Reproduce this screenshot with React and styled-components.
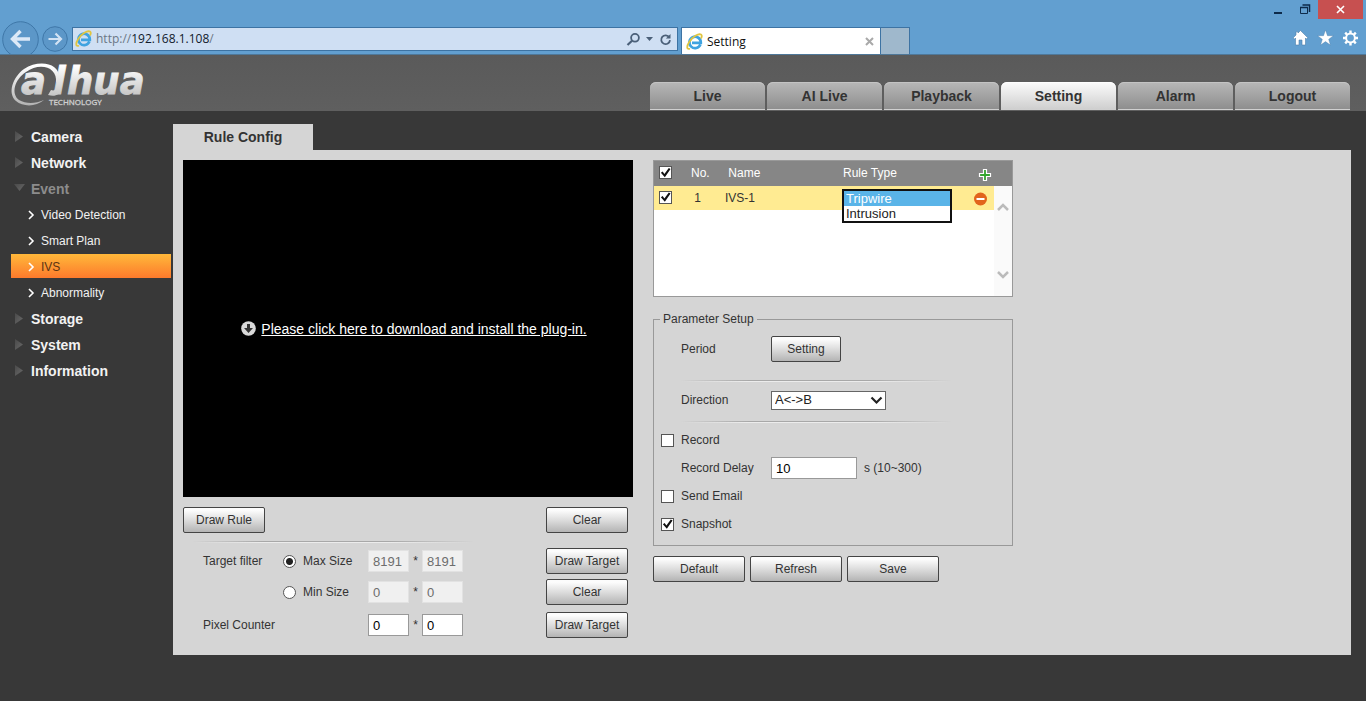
import React, { useState } from "react";
import styled, { createGlobalStyle, css } from "styled-components";

const GlobalStyle = createGlobalStyle`
  * {
    box-sizing: border-box;
  }
  body {
    margin: 0;
    background: #383838;
    color: #333;
    font-family: "Liberation Sans", Arial, sans-serif;
    font-size: 12px;
    line-height: 14px;
  }
  button, input, select {
    margin: 0;
    font-family: inherit;
  }
`;

/* ---------- browser window ---------- */

const BrowserBar = styled.div`
  height: 55px;
  overflow: hidden;
  background: #629fd0;
  border-bottom: 1px solid #4f7899;
  font-family: "Open Sans", "Noto Sans", sans-serif;
`;

const TitleBar = styled.div`
  display: flex;
  justify-content: flex-end;
  height: 19px;
  padding-right: 3px;
`;

const WindowButton = styled.button`
  display: grid;
  place-items: center;
  width: ${(p) => (p.$close ? "45px" : "26px")};
  height: 19px;
  padding: 0;
  border: 0;
  background: ${(p) => (p.$close ? "#c75050" : "transparent")};
`;

const BrowserRow = styled.div`
  display: flex;
  align-items: flex-start;
`;

const NavButtons = styled.div`
  display: flex;
  gap: 3px;
  width: 72px;
  flex: none;
  padding: 2px 0 0 2px;
`;

const RoundButton = styled.button`
  display: block;
  padding: 0;
  border: 0;
  background: none;
  height: ${(p) => p.$size}px;
  margin-top: ${(p) => (p.$size < 30 ? 5 : 0)}px;
`;

const AddressBar = styled.form`
  display: flex;
  align-items: center;
  gap: 3px;
  flex: 0 1 606px;
  height: 24px;
  margin-top: 8px;
  padding: 0 5px 0 2px;
  background: #cfdff3;
  border: 1px solid #3d73a3;
`;

const Address = styled.div`
  flex: 1;
  font-size: 12px;
  line-height: 18px;
  color: #111a2b;

  span {
    color: #6b7785;
  }
`;

const IconButton = styled.button`
  display: grid;
  place-items: center;
  padding: 0;
  border: 0;
  background: none;
`;

const BrowserTab = styled.div`
  display: flex;
  align-items: center;
  gap: 3px;
  width: 200px;
  height: 28px;
  margin: 8px 0 0 3px;
  padding: 0 6px 0 4px;
  background: #fff;
  border: 1px solid #3d73a3;
  border-bottom: 0;
  font-size: 12px;
  line-height: 18px;
  color: #111;

  span {
    flex: 1;
  }
`;

const NewTab = styled.button`
  width: 29px;
  height: 28px;
  margin-top: 8px;
  padding: 0;
  background: #9fb8cc;
  border: 1px solid #3d73a3;
  border-width: 1px 1px 0 0;
`;

const BrowserTools = styled.div`
  display: flex;
  gap: 8px;
  margin: 10px 7px 0 auto;
`;

const EdgeLogo = () => (
  <svg width="18" height="18" viewBox="0 0 18 18" fill="none">
    <path
      d="M14.4 11.6a5.7 5.7 0 1 1 .4-2.6v.8H6"
      stroke="#3fa3e0"
      strokeWidth="2.7"
    />
    <path
      d="M3.3 15.8C.6 16.6.6 13 3.2 9 6.4 4 12.6.1 15 1.6c1 .6.9 1.8.3 3.2"
      stroke="#e0c540"
      strokeWidth="1.8"
      strokeLinecap="round"
    />
  </svg>
);

const BrowserChrome = () => (
  <BrowserBar>
    <TitleBar>
      <WindowButton aria-label="Minimize">
        <svg width="10" height="10" viewBox="0 0 10 10">
          <path d="M0 7h8v2H0z" fill="#0d2a4a" />
        </svg>
      </WindowButton>
      <WindowButton aria-label="Restore">
        <svg width="11" height="11" viewBox="0 0 11 11" fill="none" stroke="#0d2a4a">
          <path d="M.5 3.5h7v6h-7z" />
          <path d="M0 3.5h8M2.5 1h7v7" strokeWidth="1.5" />
        </svg>
      </WindowButton>
      <WindowButton $close aria-label="Close">
        <svg width="9" height="9" viewBox="0 0 9 9" stroke="#fff" strokeWidth="1.6">
          <path d="M1 1l7 7M8 1l-7 7" />
        </svg>
      </WindowButton>
    </TitleBar>
    <BrowserRow>
      <NavButtons>
        <RoundButton $size={37} aria-label="Back">
          <svg width="37" height="37" viewBox="0 0 37 37" fill="none">
            <circle cx="18.5" cy="18.5" r="17.8" fill="#5c97c8" stroke="#3f77a8" />
            <path
              d="M18.5 10l-8 8 8 8M11 18h17"
              stroke="#dce9f7"
              strokeWidth="3.4"
            />
          </svg>
        </RoundButton>
        <RoundButton $size={26} aria-label="Forward">
          <svg width="26" height="26" viewBox="0 0 26 26" fill="none">
            <circle cx="13" cy="13" r="12.3" fill="#5c97c8" stroke="#3f77a8" />
            <path d="M13.5 7.5l5.5 5.5-5.5 5.5M6.5 13h12" stroke="#d3e3f4" strokeWidth="2.2" />
          </svg>
        </RoundButton>
      </NavButtons>
      <AddressBar>
        <EdgeLogo />
        <Address>
          <span>http://</span>192.168.1.108<span>/</span>
        </Address>
        <IconButton type="button" aria-label="Search">
          <svg width="15" height="15" viewBox="0 0 15 15" fill="none" stroke="#4b6079">
            <circle cx="9" cy="5.8" r="3.9" strokeWidth="1.8" />
            <path d="M6 8.8L1.5 13" strokeWidth="2.2" />
          </svg>
        </IconButton>
        <IconButton type="button" aria-label="Show address bar list">
          <svg width="12" height="10" viewBox="0 0 12 10">
            <path d="M2 3h7L5.5 7z" fill="#4b6079" />
          </svg>
        </IconButton>
        <IconButton type="button" aria-label="Reload">
          <svg width="13" height="13" viewBox="0 0 13 13" fill="none" stroke="#4b6079">
            <path d="M10.3 4.3A4.4 4.4 0 1 0 11 7.2" strokeWidth="1.8" />
            <path d="M11.5 1v4.6H6.9z" fill="#4b6079" stroke="none" />
          </svg>
        </IconButton>
      </AddressBar>
      <BrowserTab>
        <EdgeLogo />
        <span>Setting</span>
        <IconButton aria-label="Close tab">
          <svg width="9" height="9" viewBox="0 0 9 9" stroke="#a9a9a9" strokeWidth="2">
            <path d="M1 1l7 7M8 1l-7 7" />
          </svg>
        </IconButton>
      </BrowserTab>
      <NewTab aria-label="New tab" />
      <BrowserTools>
        <IconButton aria-label="Home">
          <svg width="17" height="18" viewBox="0 0 17 18">
            <path
              d="M8.5 1.5l7.3 7.3-1.3 1.3-1-1V16H10v-5H7v5H3.5V9.1l-1 1-1.300-1.300L4 6V2.800h2V4z"
              fill="#fff"
              stroke="#4e7ea8"
              strokeWidth=".6"
            />
          </svg>
        </IconButton>
        <IconButton aria-label="Favorites">
          <svg width="17" height="18" viewBox="0 0 17 18">
            <path
              d="M8.5 1l2 5.7h5.9l-4.7 3.6 1.700 5.800-4.900-3.500-4.900 3.500 1.700-5.800L.6 6.700h5.900z"
              fill="#fff"
              stroke="#4e7ea8"
              strokeWidth=".4"
            />
          </svg>
        </IconButton>
        <IconButton aria-label="Tools">
          <svg width="17" height="18" viewBox="0 0 17 18" fill="none" stroke="#fff">
            <circle cx="8.5" cy="9" r="4.4" strokeWidth="2" />
            <path
              d="M8.5 1.5v3M8.5 13.5v3M1 9h3M13 9h3M3.200 3.700l2.100 2.100M11.700 12.200l2.100 2.100M3.200 14.300l2.100-2.100M11.700 5.800l2.100-2.100"
              strokeWidth="2.4"
            />
          </svg>
        </IconButton>
      </BrowserTools>
    </BrowserRow>
  </BrowserBar>
);

/* ---------- page header ---------- */

const Header = styled.header`
  display: flex;
  align-items: flex-end;
  justify-content: space-between;
  height: 56px;
  padding: 0 16px 1px 10px;
  background: linear-gradient(#5a5a5a, #5f5f5f);
`;

const TopNav = styled.nav`
  display: flex;
  gap: 2px;
`;

const TopLink = styled.a`
  width: 115px;
  height: 28px;
  border-radius: 6px 6px 0 0;
  border-bottom: 1px solid #d0d0d0;
  box-shadow: inset 0 1px 0 ${(p) => (p.$active ? "#fff" : "#c4c4c4")};
  background: ${(p) =>
    p.$active
      ? "linear-gradient(#fcfcfc, #cfcfcf)"
      : "linear-gradient(#b8b8b8, #8e8e8e)"};
  color: #333;
  font-size: 14px;
  font-weight: bold;
  line-height: 29px;
  text-align: center;
  text-decoration: none;
`;

const LogoMark = styled.svg`
  display: block;
  overflow: visible;
`;

const Logo = () => (
  <LogoMark width="144" height="52" viewBox="0 0 144 52" role="img" aria-label="alhua technology">
    <defs>
      <linearGradient id="metal" gradientUnits="userSpaceOnUse" x1="0" y1="8" x2="0" y2="50">
        <stop offset="0" stopColor="#fff" />
        <stop offset="1" stopColor="#adadad" />
      </linearGradient>
    </defs>
    <g
      fill="url(#metal)"
      stroke="url(#metal)"
      strokeWidth=".8"
      fontFamily="DejaVu Sans, sans-serif"
      fontStyle="italic"
      fontWeight="bold"
      fontSize="37"
    >
      <text x="11" y="36">a</text>
      <text x="43" y="36">l</text>
      <text x="57" y="36">hua</text>
    </g>
    <path
      d="M51 31c-1 6-6 8-13 6l3-5c3 1 4 0 5-2z"
      fill="url(#metal)"
    />
    <path
      d="M46 25C48 9 30 4 16 14C4 22 1 36 9 42c7 4 16 4 25 0c-8 7-21 7-28 1C-3 35 3 19 14 11c15-10 36-6 35 9z"
      fill="url(#metal)"
    />
    <text
      x="39"
      y="47"
      fill="#d0d0d0"
      fontFamily="Open Sans, Noto Sans, sans-serif"
      fontSize="8"
      stroke="#d0d0d0"
      strokeWidth=".3"
    >
      TECHNOLOGY
    </text>
  </LogoMark>
);

/* ---------- side menu ---------- */

const Body = styled.div`
  display: flex;
  align-items: flex-start;
  gap: 2px;
  padding: 13px 15px 46px 11px;
`;

const SideMenu = styled.nav`
  flex: none;
  width: 160px;
`;

const MenuLink = styled.a`
  display: flex;
  align-items: center;
  gap: 6px;
  height: 26px;
  padding-left: 3px;
  color: ${(p) => (p.$open ? "#8c8c8c" : "#f2f2f2")};
  font-size: 14px;
  font-weight: bold;
  line-height: 16px;
  text-decoration: none;
`;

const SubLink = styled.a`
  display: flex;
  align-items: center;
  gap: 6px;
  height: 24px;
  margin-bottom: 2px;
  padding: 2px 0 0 16px;
  color: #f2f2f2;
  text-decoration: none;

  ${(p) =>
    p.$active &&
    css`
      background: linear-gradient(#ffb83a, #fd7a2c);
      color: #5c3413;
    `}
`;

const MenuArrow = ({ open }) => (
  <svg width="11" height="12" viewBox="0 0 11 12">
    <defs>
      <linearGradient id="arrow" x1="0" y1="0" x2="1" y2="1">
        <stop offset="0" stopColor="#4a4a4a" />
        <stop offset="1" stopColor="#696969" />
      </linearGradient>
    </defs>
    <path d={open ? "M0 1h11L5.5 8z" : "M1 0l8 5.5-8 5.5z"} fill="url(#arrow)" />
  </svg>
);

const SubArrow = () => (
  <svg width="8" height="10" viewBox="0 0 8 10" fill="none" stroke="#fff" strokeWidth="1.6">
    <path d="M2 1l4 4-4 4" />
  </svg>
);

/* ---------- main panel ---------- */

const Main = styled.main`
  flex: 1;
  min-width: 0;
`;

const PageTab = styled.h1`
  width: 140px;
  margin: 0;
  color: #333;
  background: #d5d5d5;
  font-size: 14px;
  line-height: 26px;
  text-align: center;
`;

const Panel = styled.div`
  display: flex;
  gap: 20px;
  padding: 10px 10px 17px;
  background: #d5d5d5;
`;

const VideoColumn = styled.section`
  flex: none;
  width: 450px;
`;

const Video = styled.div`
  display: flex;
  align-items: center;
  justify-content: center;
  gap: 5px;
  height: 337px;
  padding-left: 12px;
  background: #000;

  a {
    color: #fff;
    font-size: 14px;
    line-height: 16px;
  }
`;

const Button = styled.button`
  width: ${(p) => p.$width || 82}px;
  height: 26px;
  padding: 0;
  border: 1px solid #444;
  border-radius: 2px;
  background: linear-gradient(#fcfcfc 10%, #ddd 50%, #b4b4b4);
  color: #333;
  font-size: 12px;
  line-height: 14px;
`;

const ButtonBar = styled.div`
  display: flex;
  gap: 5px;
  justify-content: ${(p) => (p.$spread ? "space-between" : "flex-start")};
  margin-top: 10px;
  padding-right: ${(p) => (p.$spread ? 5 : 0)}px;
`;

const Divider = styled.hr`
  width: ${(p) => p.$width}px;
  height: 2px;
  margin: ${(p) => p.$margin};
  border: 0;
  background: linear-gradient(#a8a8a8 50%, #ececec 50%);
  mask-image: linear-gradient(90deg, transparent, #000 25%, #000 70%, transparent);
`;

const FilterRow = styled.div`
  display: grid;
  grid-template-columns: 80px 85px 41px 13px 41px 1fr;
  align-items: center;
  height: 26px;
  margin-bottom: ${(p) => p.$gap || 0}px;
  padding: 0 5px 0 20px;
  text-align: center;

  > :first-child {
    text-align: left;
  }
  > :last-child {
    justify-self: end;
  }
`;

const TextInput = styled.input`
  width: ${(p) => p.$width || 41}px;
  height: 22px;
  padding: 0 4px;
  border: 1px solid #999;
  background: #fff;
  color: #000;
  font-size: 13px;

  &:disabled {
    border-color: #e2e2e2;
    background: #f0f0f0;
    color: #6d6d6d;
  }
`;

const RadioLabel = styled.label`
  display: flex;
  align-items: center;
  gap: 7px;
`;

const Radio = styled.input.attrs({ type: "radio" })`
  appearance: none;
  width: 13px;
  height: 13px;
  border: 1px solid #555;
  border-radius: 50%;
  background: #fff;

  &:checked {
    background: radial-gradient(circle, #222 3px, #fff 4px);
  }
`;

const Checkbox = styled.input.attrs({ type: "checkbox" })`
  appearance: none;
  display: block;
  width: 13px;
  height: 13px;
  border: 1px solid #555;
  background: #fff;

  &:checked::before {
    content: "";
    display: block;
    height: 11px;
    background: #111;
    clip-path: polygon(8% 52%, 24% 42%, 40% 64%, 80% 8%, 96% 18%, 44% 94%);
  }
`;

/* ---------- rule list ---------- */

const RuleColumn = styled.section`
  flex: none;
  width: 360px;
`;

const RuleBox = styled.div`
  position: relative;
  height: 137px;
  border: 1px solid #999;
  background: #fff;
`;

const RuleTable = styled.table`
  width: 100%;
  table-layout: fixed;
  border-collapse: collapse;

  th {
    height: 25px;
    padding: 0 0 2px;
    background: #868686;
    color: #fff;
    font-weight: normal;
    text-align: left;
  }
  td {
    height: 24px;
    padding: 0;
    background: #ffeb92;
  }
  th:first-child, td:first-child {
    padding-left: 5px;
  }
  td:first-child {
    padding-bottom: 2px;
  }
  th:last-child {
    padding: 3px 0 0;
  }
`;

const TypeCell = styled.td`
  position: relative;
`;

const TypeList = styled.select`
  position: absolute;
  top: 3px;
  left: -1px;
  width: 110px;
  height: 34px;
  padding: 0;
  border: 2px solid #111;
  border-radius: 0;
  background: #fff;
  font-size: 13px;
  overflow: hidden;
  outline: 0;

  option {
    height: 15px;
    min-height: 0;
    padding: 0 2px;
    line-height: 15px;
    color: #222;
  }
  option:checked {
    background: linear-gradient(#5ab4e8, #5ab4e8);
    -webkit-text-fill-color: #fff;
  }
`;

const ScrollBar = styled.div`
  position: absolute;
  top: 25px;
  right: 0;
  bottom: 0;
  display: flex;
  flex-direction: column;
  justify-content: space-between;
  align-items: center;
  width: 18px;
  padding: 16px 0;
  background: #fafafa;
`;

const Chevron = ({ d }) => (
  <svg width="12" height="12" viewBox="0 0 12 12" fill="none" stroke="#bbb" strokeWidth="2.5">
    <path d={d} />
  </svg>
);

/* ---------- parameters ---------- */

const Parameters = styled.fieldset`
  margin: 15px 0 0;
  padding: 0 7px 7px;
  border: 1px solid #999;

  legend {
    margin-left: -1px;
    padding: 0 3px;
  }
`;

const ParamRow = styled.div`
  display: grid;
  grid-template-columns: 20px 90px auto 1fr;
  align-items: center;
  height: ${(p) => p.$height || 28}px;
`;

const Unit = styled.span`
  padding-left: 7px;
`;

const SelectWrap = styled.div`
  display: grid;
  align-items: center;

  > * {
    grid-area: 1 / 1;
  }
  svg {
    justify-self: end;
    margin-right: 3px;
    pointer-events: none;
  }
`;

const DirectionSelect = styled.select`
  appearance: none;
  width: 115px;
  height: 19px;
  padding: 0 3px 3px;
  border: 1px solid #666;
  border-radius: 0;
  background: #fff;
  color: #222;
  font-size: 13px;
`;

const topLinks = ["Live", "AI Live", "Playback", "Setting", "Alarm", "Logout"];

const menu = [
  { name: "Camera" },
  { name: "Network" },
  {
    name: "Event",
    items: ["Video Detection", "Smart Plan", "IVS", "Abnormality"],
  },
  { name: "Storage" },
  { name: "System" },
  { name: "Information" },
];

const RuleList = () => (
  <RuleBox>
    <RuleTable>
      <colgroup>
        <col width="37" />
        <col width="34" />
        <col width="118" />
        <col width="130" />
        <col />
      </colgroup>
      <thead>
        <tr>
          <th>
            <Checkbox defaultChecked aria-label="Select all rules" />
          </th>
          <th>No.</th>
          <th>&nbsp;Name</th>
          <th>Rule Type</th>
          <th>
            <IconButton aria-label="Add rule">
              <svg width="21" height="14" viewBox="0 0 21 14">
                <path
                  d="M10.5 1.5h3v4h4v3h-4v4h-3v-4h-4v-3h4z"
                  fill="#35a52e"
                  stroke="#fff"
                  strokeWidth="1.2"
                />
              </svg>
            </IconButton>
          </th>
        </tr>
      </thead>
      <tbody>
        <tr>
          <td>
            <Checkbox defaultChecked aria-label="Select IVS-1" />
          </td>
          <td>&nbsp;1</td>
          <td>IVS-1</td>
          <TypeCell>
            <TypeList size={2} defaultValue="Tripwire" aria-label="Rule Type">
              <option>Tripwire</option>
              <option>Intrusion</option>
            </TypeList>
          </TypeCell>
          <td>
            <IconButton aria-label="Delete rule">
              <svg width="16" height="15" viewBox="0 0 16 15">
                <circle cx="7.5" cy="8" r="6.5" fill="#e2641c" />
                <path d="M3.5 7h8v2h-8z" fill="#fff" />
              </svg>
            </IconButton>
          </td>
        </tr>
      </tbody>
    </RuleTable>
    <ScrollBar>
      <Chevron d="M1 8l5-5 5 5" />
      <Chevron d="M1 4l5 5 5-5" />
    </ScrollBar>
  </RuleBox>
);

const SizeInputs = ({ name, value, disabled }) => (
  <>
    <TextInput aria-label={`${name} width`} defaultValue={value} disabled={disabled} />
    <span>*</span>
    <TextInput aria-label={`${name} height`} defaultValue={value} disabled={disabled} />
  </>
);

const App = () => {
  const [filter, setFilter] = useState("max");

  return (
    <>
      <GlobalStyle />
      <BrowserChrome />
      <Header>
        <Logo />
        <TopNav>
          {topLinks.map((name) => (
            <TopLink key={name} href="#" $active={name === "Setting"}>
              {name}
            </TopLink>
          ))}
        </TopNav>
      </Header>
      <Body>
        <SideMenu>
          {menu.map(({ name, items }) => (
            <React.Fragment key={name}>
              <MenuLink href="#" $open={!!items}>
                <MenuArrow open={!!items} />
                {name}
              </MenuLink>
              {items &&
                items.map((item) => (
                  <SubLink key={item} href="#" $active={item === "IVS"}>
                    <SubArrow />
                    {item}
                  </SubLink>
                ))}
            </React.Fragment>
          ))}
        </SideMenu>
        <Main>
          <PageTab>Rule Config</PageTab>
          <Panel>
            <VideoColumn>
              <Video>
                <svg width="15" height="15" viewBox="0 0 15 15">
                  <circle cx="7.5" cy="7.5" r="7.3" fill="#d9d9d9" />
                  <path d="M6 3h3v4h3l-4.5 5L3 7h3z" fill="#333" />
                </svg>
                <a href="#">Please click here to download and install the plug-in.</a>
              </Video>
              <ButtonBar $spread>
                <Button>Draw Rule</Button>
                <Button>Clear</Button>
              </ButtonBar>
              <Divider $width={280} $margin="8px 0 5px 10px" />
              <FilterRow $gap={5}>
                <span>Target filter</span>
                <RadioLabel>
                  <Radio
                    name="filter"
                    checked={filter === "max"}
                    onChange={() => setFilter("max")}
                  />
                  Max Size
                </RadioLabel>
                <SizeInputs name="Max" value="8191" disabled />
                <Button>Draw Target</Button>
              </FilterRow>
              <FilterRow $gap={7}>
                <span />
                <RadioLabel>
                  <Radio
                    name="filter"
                    checked={filter === "min"}
                    onChange={() => setFilter("min")}
                  />
                  Min Size
                </RadioLabel>
                <SizeInputs name="Min" value="0" disabled />
                <Button>Clear</Button>
              </FilterRow>
              <FilterRow>
                <span>Pixel Counter</span>
                <span />
                <SizeInputs name="Pixel" value="0" />
                <Button>Draw Target</Button>
              </FilterRow>
            </VideoColumn>
            <RuleColumn>
              <RuleList />
              <Parameters>
                <legend>Parameter Setup</legend>
                <ParamRow $height={46}>
                  <span />
                  <span>Period</span>
                  <Button $width={70}>Setting</Button>
                </ParamRow>
                <Divider $width={270} $margin="8px 0 0 20px" />
                <ParamRow $height={36}>
                  <span />
                  <label htmlFor="direction">Direction</label>
                  <SelectWrap>
                    <DirectionSelect id="direction">
                      <option>{"A<->B"}</option>
                    </DirectionSelect>
                    <svg width="13" height="9" viewBox="0 0 13 9" fill="none" stroke="#222">
                      <path d="M1.5 1.5l5 5 5-5" strokeWidth="2.2" />
                    </svg>
                  </SelectWrap>
                </ParamRow>
                <Divider $width={270} $margin="3px 0 3px 20px" />
                <ParamRow>
                  <Checkbox id="record" />
                  <label htmlFor="record">Record</label>
                </ParamRow>
                <ParamRow>
                  <span />
                  <label htmlFor="delay">Record Delay</label>
                  <TextInput id="delay" $width={86} defaultValue="10" />
                  <Unit>s (10~300)</Unit>
                </ParamRow>
                <ParamRow>
                  <Checkbox id="email" />
                  <label htmlFor="email">Send Email</label>
                </ParamRow>
                <ParamRow>
                  <Checkbox id="snapshot" defaultChecked />
                  <label htmlFor="snapshot">Snapshot</label>
                </ParamRow>
              </Parameters>
              <ButtonBar>
                <Button $width={92}>Default</Button>
                <Button $width={92}>Refresh</Button>
                <Button $width={92}>Save</Button>
              </ButtonBar>
            </RuleColumn>
          </Panel>
        </Main>
      </Body>
    </>
  );
};

export default App;
